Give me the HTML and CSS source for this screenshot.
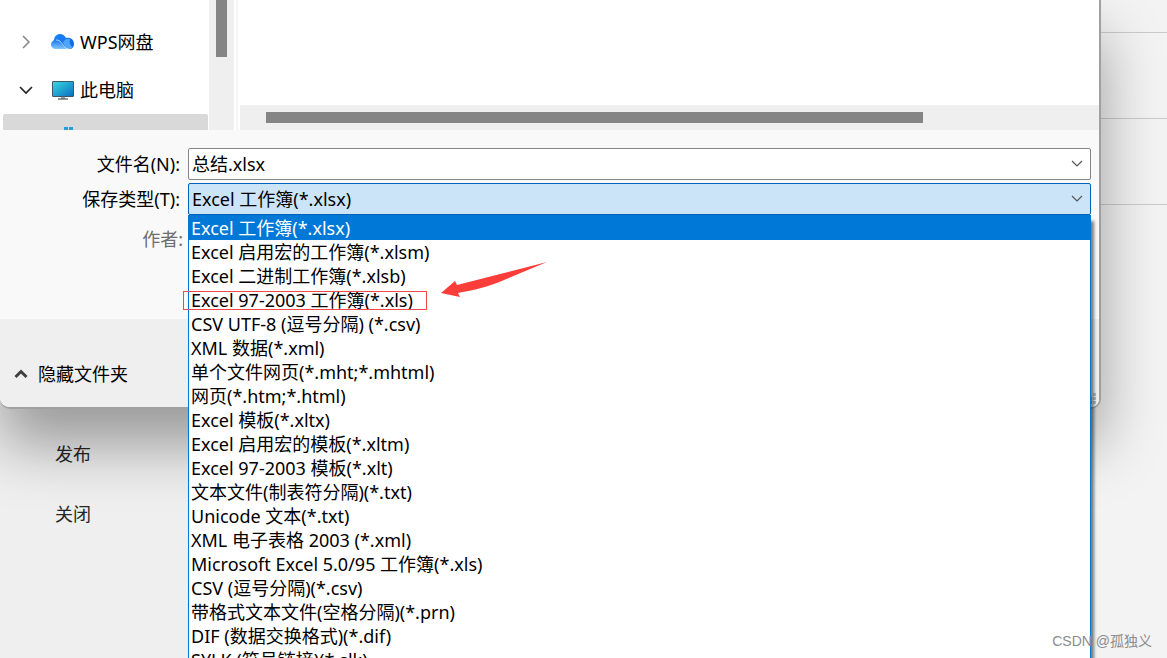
FILE: index.html
```html
<!DOCTYPE html>
<html lang="zh-CN">
<head>
<meta charset="utf-8">
<title>另存为</title>
<link rel="stylesheet" href="styles.css">
</head>
<body>
<div class="backstage">
  <nav class="backstage-nav">
    <a class="backstage-link" href="#publish">发布</a>
    <a class="backstage-link" href="#close">关闭</a>
  </nav>
  <main class="backstage-main">
    <div class="line"></div>
    <div class="line"></div>
    <div class="line"></div>
  </main>
</div>

<section class="dialog" role="dialog" aria-label="另存为">
  <div class="browser">
    <div class="tree">
      <button class="tree-item" type="button">
        <svg class="chevron" viewBox="0 0 14 14"><path d="M4 1l6 6-6 6" fill="none" stroke="#8a8a8a" stroke-width="1.6"/></svg>
        <svg class="tree-icon" viewBox="0 0 24 18">
          <defs>
            <linearGradient id="cloudBack" x1="0" y1="0" x2="1" y2="1"><stop offset="0" stop-color="#1b86ff"/><stop offset="1" stop-color="#0f62dc"/></linearGradient>
            <linearGradient id="cloudFront" x1="0" y1="0" x2="0" y2="1"><stop offset="0" stop-color="#1677f5"/><stop offset="1" stop-color="#82c6ff"/></linearGradient>
          </defs>
          <path d="M3 8C3 3 6 1 9 1c3 0 5 2 6 4 5-1 8 2 8 6 0 3-2 5-5 5H8z" fill="url(#cloudBack)"/>
          <path d="M12 9c2-3 5-4 7-3-1 3 0 7 3 8-1 2-3 2-5 2-3-1-4-4-5-7z" fill="#4fa4fb"/>
          <path d="M5 16c-3 0-5-2-5-4 0-3 2-5 5-5 6 0 7 9 14 9z" fill="url(#cloudFront)"/>
          <path d="M5 7c5 0 6 4 8 6 1 2 3 3 5 3" fill="none" stroke="#cfe8ff" stroke-width="0.8"/>
        </svg>
        <span>WPS网盘</span>
      </button>
      <button class="tree-item" type="button">
        <svg class="chevron" viewBox="0 0 14 14"><path d="M1 4l6 6 6-6" fill="none" stroke="#222" stroke-width="1.6"/></svg>
        <svg class="tree-icon" viewBox="0 0 24 20">
          <defs><linearGradient id="screen" x1="0" y1="0" x2="1" y2="1"><stop offset="0" stop-color="#35dbe3"/><stop offset="1" stop-color="#0b6cbd"/></linearGradient></defs>
          <rect x="1.5" y="1.5" width="21" height="15" rx="0.5" fill="url(#screen)" stroke="#3f5666"/>
          <path d="M10 17h4v2h-4z" fill="#9aa4aa"/><path d="M7 19h10" stroke="#4c5458" stroke-width="1.2"/>
        </svg>
        <span>此电脑</span>
      </button>
      <div class="tree-selected">
        <svg class="tiles" viewBox="0 0 9 3"><path d="M0 0h4v3H0zM5 0h4v3H5z" fill="#1e9fe0"/></svg>
      </div>
    </div>
    <div class="scroll-y"><div class="thumb-y"></div></div>
    <div class="files">
      <div class="scroll-x"><div class="thumb-x"></div></div>
    </div>
  </div>

  <form class="form">
    <label class="label" for="filename">文件名(N):</label>
    <div class="combo">
      <input class="field" id="filename" type="text" value="总结.xlsx">
      <svg class="arrow" viewBox="0 0 12 8"><path d="M1 1l5 5 5-5" fill="none" stroke="#555" stroke-width="1.2"/></svg>
    </div>
    <label class="label" for="filetype">保存类型(T):</label>
    <div class="combo">
      <select class="field field-open" id="filetype"><option>Excel 工作簿(*.xlsx)</option></select>
      <svg class="arrow" viewBox="0 0 12 8"><path d="M1 1l5 5 5-5" fill="none" stroke="#555" stroke-width="1.2"/></svg>
      <ul class="popup" role="listbox" aria-label="保存类型">
        <li class="option option-active" role="option" aria-selected="true">Excel 工作簿(*.xlsx)</li>
        <li class="option" role="option">Excel 启用宏的工作簿(*.xlsm)</li>
        <li class="option" role="option">Excel 二进制工作簿(*.xlsb)</li>
        <li class="option option-marked" role="option">Excel 97-2003 工作簿(*.xls)
          <svg class="pointer" viewBox="0 0 108 38"><path d="M1 33L15 21l2 4L107 2 64 20C48 27 34 30 18 33l2 4z" fill="#fc3d39"/></svg>
        </li>
        <li class="option" role="option">CSV UTF-8 (逗号分隔) (*.csv)</li>
        <li class="option" role="option">XML 数据(*.xml)</li>
        <li class="option" role="option">单个文件网页(*.mht;*.mhtml)</li>
        <li class="option" role="option">网页(*.htm;*.html)</li>
        <li class="option" role="option">Excel 模板(*.xltx)</li>
        <li class="option" role="option">Excel 启用宏的模板(*.xltm)</li>
        <li class="option" role="option">Excel 97-2003 模板(*.xlt)</li>
        <li class="option" role="option">文本文件(制表符分隔)(*.txt)</li>
        <li class="option" role="option">Unicode 文本(*.txt)</li>
        <li class="option" role="option">XML 电子表格 2003 (*.xml)</li>
        <li class="option" role="option">Microsoft Excel 5.0/95 工作簿(*.xls)</li>
        <li class="option" role="option">CSV (逗号分隔)(*.csv)</li>
        <li class="option" role="option">带格式文本文件(空格分隔)(*.prn)</li>
        <li class="option" role="option">DIF (数据交换格式)(*.dif)</li>
        <li class="option" role="option">SYLK (符号链接)(*.slk)</li>
      </ul>
    </div>
    <span class="label label-muted">作者:</span>
  </form>

  <footer class="footer">
    <button class="toggle" type="button">
      <svg class="chevron" viewBox="0 0 14 14"><path d="M1.5 10L7 4.500l5.500 5.500" fill="none" stroke="#404040" stroke-width="3"/></svg>
      <span>隐藏文件夹</span>
    </button>
    <svg class="grip" viewBox="0 0 11 11"><path d="M0 8h3v3H0zM4 8h3v3H4zM8 8h3v3H8zM4 4h3v3H4zM8 4h3v3H8zM8 0h3v3H8z" fill="#b8b8b8"/></svg>
  </footer>
</section>
<div class="watermark">CSDN @孤独义</div>
</body>
</html>
```

FILE: styles.css
```css
* { box-sizing: border-box; }

body {
  margin: 0;
  height: 100vh;
  overflow: hidden;
  position: relative;
  font: 18px/24px "Noto Sans", "Noto Sans CJK SC", sans-serif;
  color: #000;
}

button, input, select { font: inherit; color: inherit; }

.backstage { display: flex; min-height: 100%; }
.backstage-nav {
  display: flex;
  flex-direction: column;
  gap: 36px;
  width: 220px;
  padding: 442px 0 0 55px;
  background: #efefef;
}
.backstage-link { color: #262626; text-decoration: none; }
.backstage-main { flex: 1; padding-top: 32px; background: #f3f3f3; }
.line { height: 86px; border-top: 1px solid #cacaca; }

/* Dialog window */
.dialog {
  position: absolute;
  top: 0;
  left: 0;
  right: 66px;
  border: solid #a0a0a0;
  border-width: 0 2px 2px 0;
  border-radius: 0 0 10px 10px;
  background: #f9f9f9;
  box-shadow: 0 36px 60px rgba(0, 0, 0, 0.36);
}

.browser { display: flex; height: 130px; background: #fff; }
.tree { display: flex; flex-direction: column; width: 209px; padding-top: 18px; }
.tree-item {
  display: flex;
  align-items: center;
  height: 48px;
  padding: 0 0 0 19px;
  border: 0;
  background: none;
}
.chevron { width: 14px; height: 14px; flex: none; }
.tree-icon { width: 24px; height: 20px; margin: 0 5px 0 18px; }
.tree-selected {
  flex: 1;
  display: flex;
  align-items: flex-end;
  margin: 0 1px 0 3px;
  padding-left: 61px;
  border-radius: 2px 2px 0 0;
  background: #d9d9d9;
}
.tiles { width: 9px; height: 3px; }
.scroll-y { width: 25px; padding-left: 7px; background: #efefef; }
.thumb-y { width: 11px; height: 57px; background: #858585; }
.files {
  flex: 1;
  display: flex;
  align-items: flex-end;
  margin-left: 2px;
  padding-left: 2px;
  border-left: 2px solid #f5f5f5;
}
.scroll-x { flex: 1; padding: 7px 176px 7px 26px; background: #efefef; }
.thumb-x { height: 11px; background: #858585; }

.form {
  display: grid;
  grid-template-columns: 188px 1fr;
  grid-template-rows: 32px 32px 40px;
  row-gap: 3px;
  height: 189px;
  padding: 18px 8px 0 0;
}
.label { padding-right: 8px; line-height: 32px; text-align: right; }
.label-muted { padding: 5px 5px 0 0; color: #6d6d6d; }
.combo { position: relative; }
.field {
  display: block;
  width: 100%;
  height: 32px;
  padding: 0 28px 2px 3px;
  border: 1px solid #868686;
  border-radius: 2px;
  background: #fff;
  outline: 0;
  appearance: none;
}
.field-open { padding-bottom: 0; border-color: #0063b8; background: #cce4f7; }
.arrow {
  position: absolute;
  top: 12px;
  right: 8px;
  width: 12px;
  height: 8px;
  pointer-events: none;
}

.popup {
  position: absolute;
  z-index: 1;
  top: 100%;
  left: 0;
  right: 0;
  margin: 0;
  padding: 0;
  list-style: none;
  border: 1px solid #0078d7;
  background: #fff;
  box-shadow: 3px 6px 3px rgba(0, 0, 0, 0.5);
}
.option { height: 24px; padding-left: 2px; }
.option-active { background: #0078d7; color: #fff; }
.option-marked { position: relative; }
.option-marked::before {
  content: "";
  position: absolute;
  top: 3px;
  left: -6px;
  width: 244px;
  height: 19px;
  box-sizing: border-box;
  border: 1px solid #f04a48;
}
.pointer { position: absolute; top: -28px; left: 251px; width: 108px; height: 38px; }

.footer {
  display: flex;
  justify-content: space-between;
  align-items: flex-end;
  height: 88px;
  padding: 0 3px 3px 14px;
  border-radius: 0 0 8px 10px;
  background: #efefef;
}
.toggle {
  display: flex;
  align-items: center;
  align-self: center;
  gap: 10px;
  padding: 24px 0 0;
  border: 0;
  background: none;
}
.grip { width: 11px; height: 11px; }

.watermark {
  position: absolute;
  z-index: 2;
  right: 15px;
  bottom: 5px;
  font: 14px/24px "Liberation Sans", "Noto Sans CJK SC", sans-serif;
  color: #8c8c8c;
}
```
